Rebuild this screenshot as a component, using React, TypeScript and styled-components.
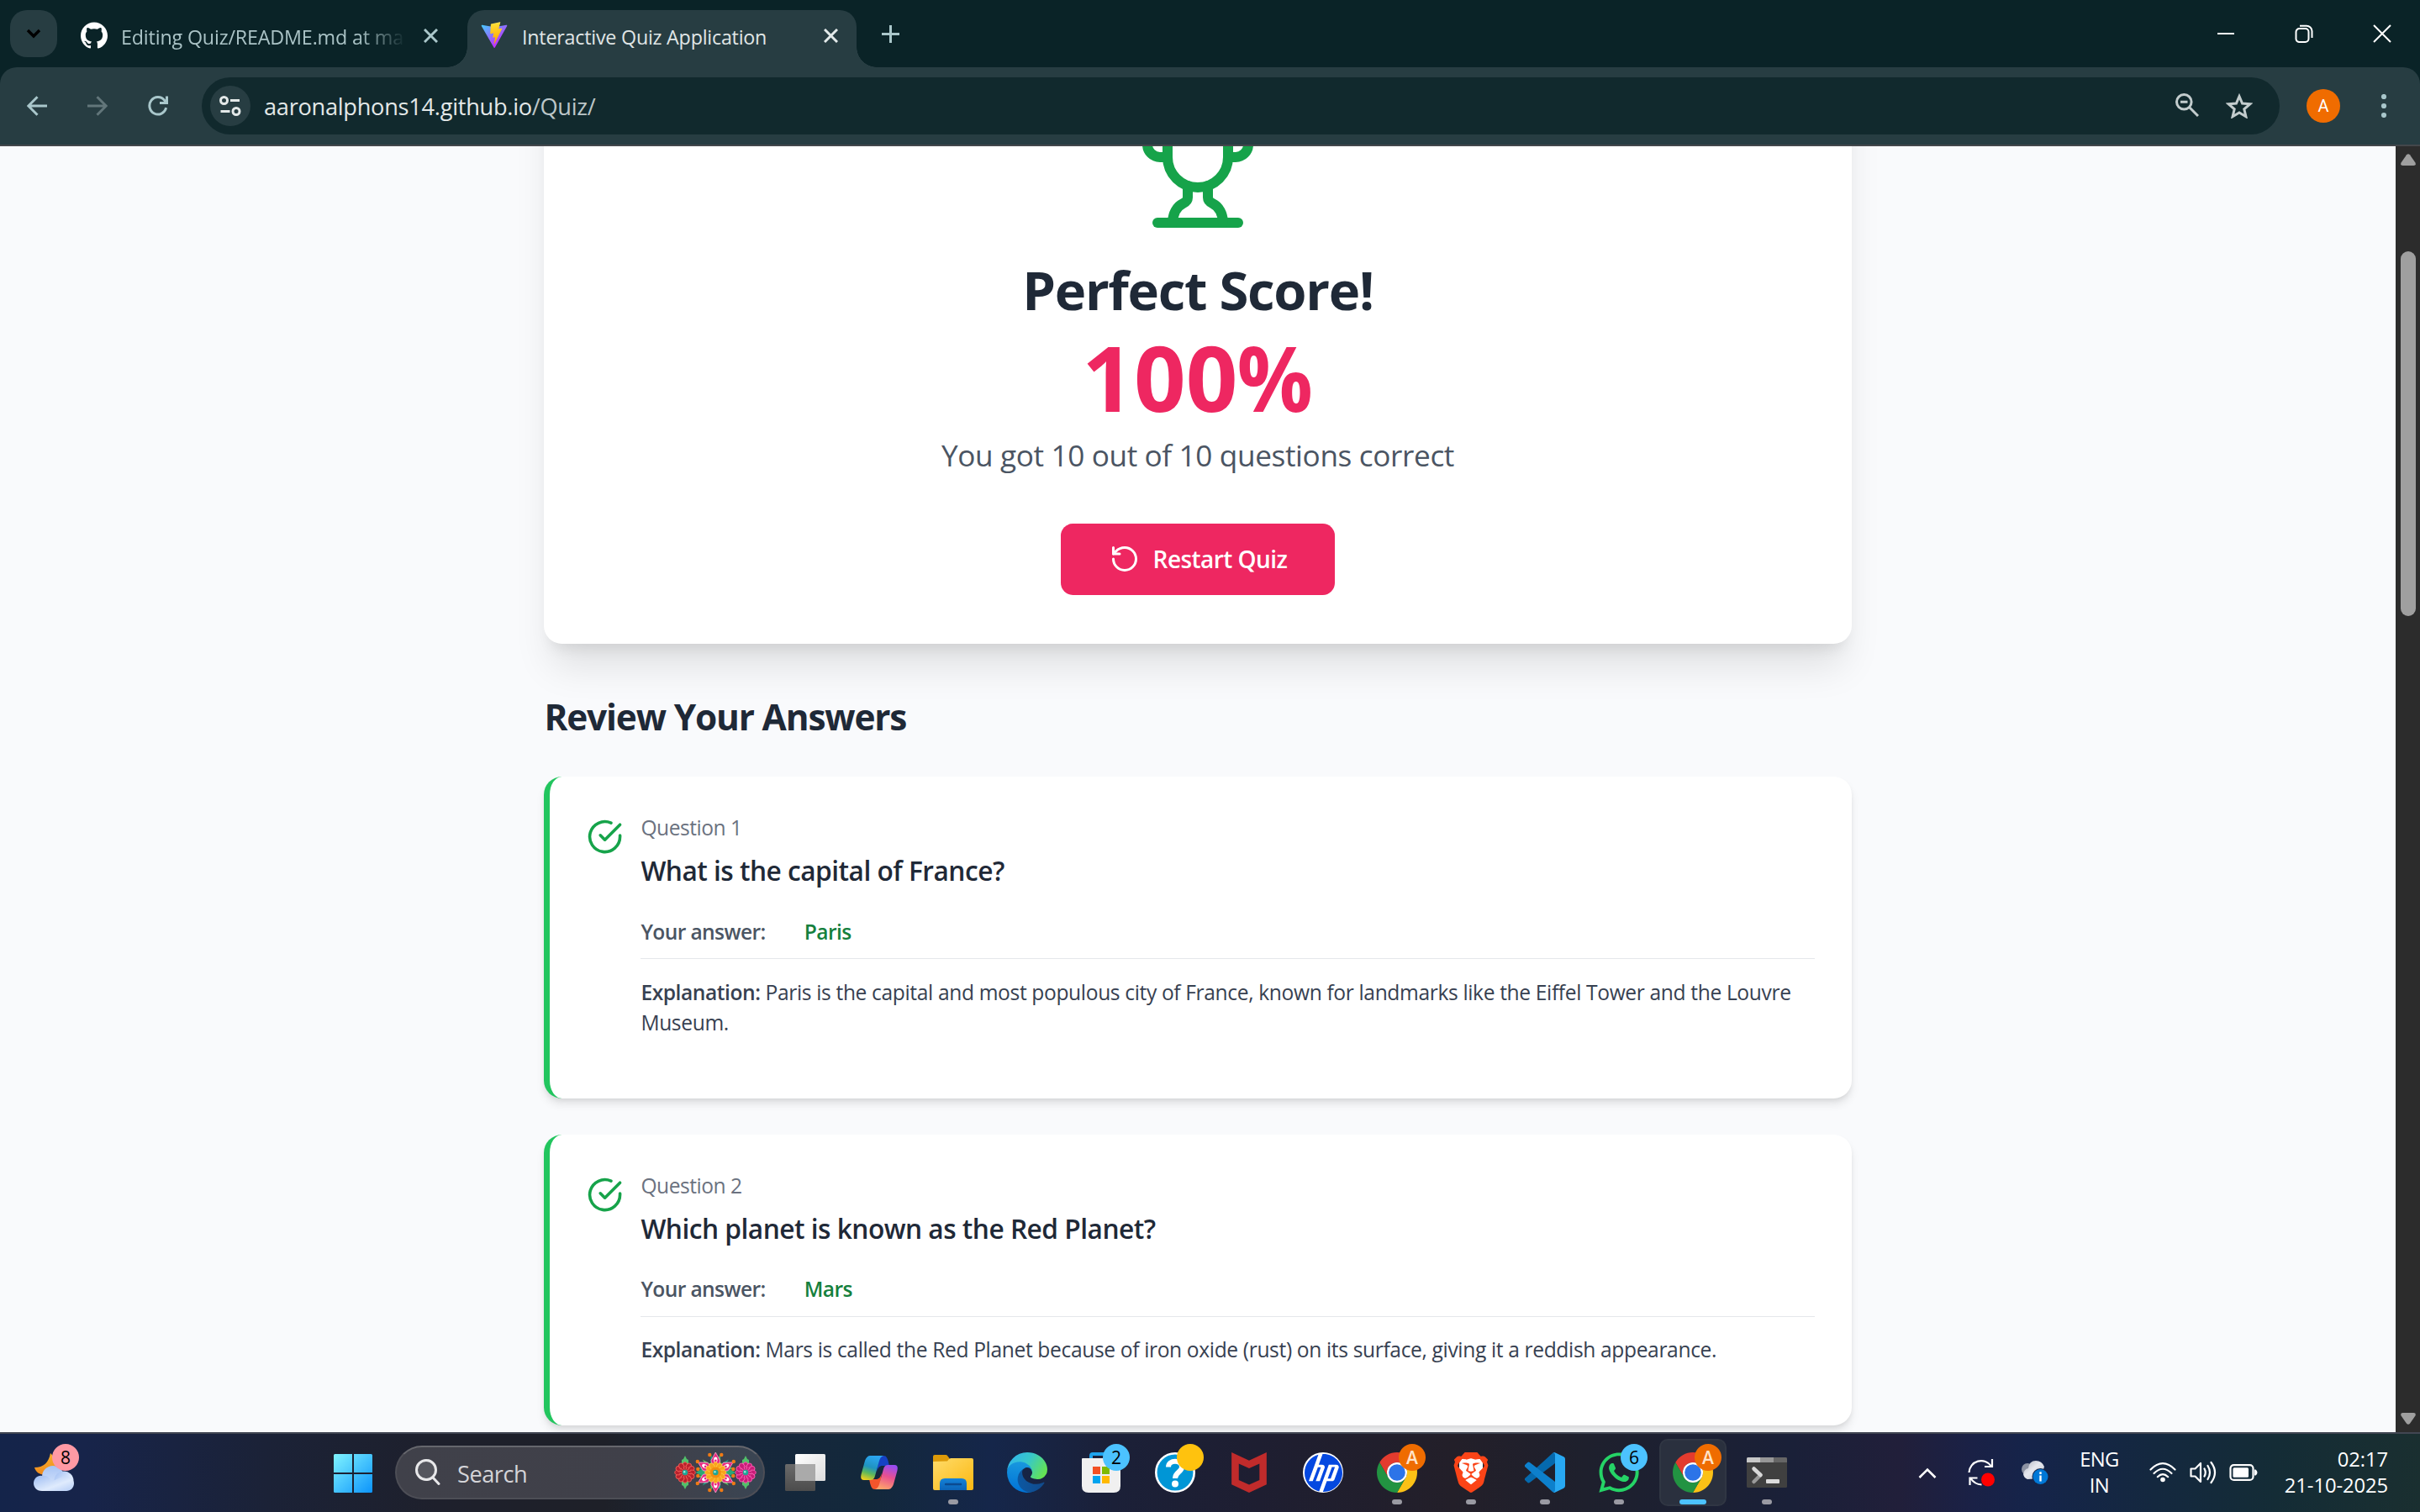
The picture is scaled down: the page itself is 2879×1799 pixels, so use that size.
import React from "react";
import styled, { createGlobalStyle, css } from "styled-components";
import { SiBrave, SiGithub, SiHp, SiMcafee } from "react-icons/si";
import { FaWhatsapp } from "react-icons/fa";

const UI_FONT = '"Open Sans", "Noto Sans", sans-serif';

const GlobalStyle = createGlobalStyle`
  * { box-sizing: border-box; }
  html, body { margin: 0; padding: 0; background: #0a2327; overflow: hidden; }
  body { font-family: ${UI_FONT}; }
  svg { display: block; flex: none; }
  h1, h2, h3, p { margin: 0; }
  button { font: inherit; border: 0; padding: 0; background: none; color: inherit; }
`;

const Screen = styled.div`
  width: 2879px;
  height: 1799px;
  display: flex;
  flex-direction: column;
  overflow: hidden;
  background: #0a2327;
`;

/* ---------- Browser chrome ---------- */

const TabStrip = styled.header`
  height: 80px;
  flex: none;
  display: flex;
  align-items: flex-start;
  padding: 12px 0 0 12px;
`;

const TabSearchButton = styled.button`
  width: 56px;
  height: 56px;
  border-radius: 20px;
  background: #273d42;
  display: grid;
  place-items: center;
`;

const Tab = styled.div<{ $active?: boolean }>`
  position: relative;
  display: flex;
  align-items: center;
  height: 68px;
  padding-bottom: 4px;
  font-size: 23.3px;
  line-height: 36px;
  white-space: nowrap;
  ${(p) =>
    p.$active
      ? css`
          width: 463px;
          padding-left: 16px;
          margin-top: 0;
          border-radius: 20px 20px 0 0;
          background: #273d42;
          color: #e0e6e6;
          letter-spacing: -0.23px;
          &::before,
          &::after {
            content: "";
            position: absolute;
            bottom: 0;
            width: 24px;
            height: 24px;
          }
          &::before {
            left: -24px;
            background: radial-gradient(circle at 0 0, transparent 23.5px, #273d42 24px);
          }
          &::after {
            right: -24px;
            background: radial-gradient(circle at 100% 0, transparent 23.5px, #273d42 24px);
          }
        `
      : css`
          width: 460px;
          margin-left: 28px;
          color: #aac3c6;
          letter-spacing: -0.17px;
        `}
`;

const TabIcon = styled.span`
  width: 32px;
  height: 32px;
  margin-top: -4px;
  display: grid;
  place-items: center;
  color: #fff;
`;

const TabTitle = styled.span<{ $width: number; $fade?: boolean }>`
  width: ${(p) => p.$width}px;
  margin-left: ${(p) => (p.$fade ? 16 : 17)}px;
  overflow: hidden;
  ${(p) => p.$fade && "mask-image: linear-gradient(to right, #000 84%, transparent 101%);"}
`;

const TabClose = styled.button<{ $gap: number; $color: string }>`
  margin: -4px 0 0 ${(p) => p.$gap}px;
  color: ${(p) => p.$color};
`;

const NewTab = styled.button`
  margin: 18px 0 0 30px;
  color: #aac7ca;
`;

const WindowControls = styled.div`
  display: flex;
  gap: 71px;
  margin: 17px 34px 0 auto;
  color: #fff;
`;

const Toolbar = styled.div`
  height: 94px;
  flex: none;
  display: flex;
  align-items: center;
  padding-left: 32px;
  border-radius: 20px 20px 0 0;
  border-bottom: 2px solid #43474b;
  background: #273d42;
  color: #a9c7cb;
`;

const NavIcons = styled.div`
  width: 208px;
  display: flex;
  gap: 48px;
`;

const NavIcon = styled.button<{ $dim?: boolean }>`
  color: ${(p) => (p.$dim ? "#62767a" : "#a9c7cb")};
`;

const Omnibox = styled.div`
  width: 2472px;
  height: 68px;
  border-radius: 34px;
  background: #11292d;
  display: flex;
  align-items: center;
  padding: 0 32px 0 10px;
  font-size: 27.2px;
  letter-spacing: -0.28px;
  color: #e3e8e8;
`;

const SiteInfo = styled.span`
  width: 48px;
  height: 48px;
  border-radius: 50%;
  background: #273d42;
  display: grid;
  place-items: center;
  margin-right: 16px;
`;

const UrlPath = styled.span`
  color: #bcc6c8;
`;

const OmniActions = styled.span`
  margin-left: auto;
  display: flex;
  gap: 32px;
  color: #c3cccd;
`;

const Avatar = styled.span`
  width: 40px;
  height: 40px;
  margin-left: 32px;
  border-radius: 50%;
  background: #f06c00;
  color: #fff;
  display: grid;
  place-items: center;
  font: 400 20px/40px Roboto, sans-serif;
`;

const MenuButton = styled.button`
  margin-left: 48px;
`;

/* ---------- Page ---------- */

const Viewport = styled.div`
  height: 1530px;
  flex: none;
  display: flex;
  overflow: hidden;
`;

const Page = styled.main`
  width: 2850px;
  height: 1530px;
  overflow: hidden;
  background: #f9fafc;
`;

const Column = styled.div`
  width: 1555.2px;
  margin: -98.6px auto 0;
  display: flex;
  flex-direction: column;
`;

const ResultCard = styled.section`
  display: flex;
  flex-direction: column;
  align-items: center;
  height: 690.2px;
  padding: 57.6px;
  border-radius: 21.6px;
  background: #fff;
  box-shadow: 0 36px 45px -9px rgba(0, 0, 0, 0.1), 0 14.4px 18px -10.8px rgba(0, 0, 0, 0.1);
`;

const ResultTitle = styled.h1`
  margin-top: 28.8px;
  padding-top: 3px;
  height: 72px;
  font-size: 63.4px;
  line-height: 72px;
  font-weight: 700;
  letter-spacing: -1.3px;
  color: #1f2937;
`;

const Score = styled.div`
  display: flex;
  margin-top: 14.4px;
  padding-top: 3px;
  height: 108px;
  font-size: 108px;
  line-height: 108px;
  font-weight: 700;
  color: #ee2761;
`;

const Percent = styled.span`
  margin: 0 -3px 0 -4px;
  transform: scaleX(0.93);
`;

const ScoreNote = styled.p`
  margin-top: 14.4px;
  padding-top: 1px;
  height: 50.4px;
  font-size: 35.2px;
  line-height: 50.4px;
  letter-spacing: -0.38px;
  color: #4b5563;
`;

const RestartButton = styled.button`
  display: flex;
  align-items: center;
  gap: 16px;
  width: 326px;
  height: 86.4px;
  margin-top: 57.6px;
  padding-left: 57.6px;
  border-radius: 14.4px;
  background: #ee2761;
  color: #fff;
  font-size: 28px;
  line-height: 43.2px;
  font-weight: 600;
  letter-spacing: -0.55px;
`;

const SectionTitle = styled.h2`
  margin: 57.6px 0 43.2px;
  padding-top: 1px;
  height: 57.6px;
  font-size: 42.4px;
  line-height: 57.6px;
  font-weight: 700;
  letter-spacing: -1.17px;
  color: #1f2937;
`;

const ReviewList = styled.div`
  display: flex;
  flex-direction: column;
  gap: 43.2px;
`;

const ReviewCard = styled.article`
  display: flex;
  gap: 21.6px;
  padding: 43.2px;
  border-left: 7.2px solid #22c55e;
  border-radius: 21.6px;
  background: #fff;
  box-shadow: 0 7.2px 10.8px -1.8px rgba(0, 0, 0, 0.1), 0 3.6px 7.2px -3.6px rgba(0, 0, 0, 0.1);
`;

const StatusIcon = styled.span`
  margin-top: 7.2px;
  color: #16a34a;
`;

const ReviewBody = styled.div`
  flex: 1;
  font-size: 24.6px;
  line-height: 36px;
  color: #374151;
`;

const QuestionIndex = styled.div`
  margin-bottom: 7.2px;
  letter-spacing: -0.48px;
  color: #6b7280;
`;

const QuestionText = styled.h3`
  margin-bottom: 28.8px;
  height: 50.4px;
  font-size: 31.7px;
  line-height: 51px;
  font-weight: 600;
  letter-spacing: -0.52px;
  color: #1f2937;
`;

const AnswerRow = styled.div`
  display: flex;
  gap: 14.4px;
  margin-bottom: 14.4px;
  line-height: 37px;
  height: 36px;
  font-weight: 600;
  letter-spacing: -0.62px;
`;

const AnswerLabel = styled.span`
  width: 180px;
  color: #4b5563;
`;

const AnswerValue = styled.span`
  color: #15803d;
`;

const Explanation = styled.p`
  margin-bottom: 28.8px;
  padding-top: 21.6px;
  border-top: 1px solid #e5e7eb;
  letter-spacing: -0.36px;
`;

const Strong = styled.strong`
  font-weight: 600;
  letter-spacing: -0.45px;
`;

const Scrollbar = styled.div`
  width: 29px;
  background: #2c2c2c;
  display: flex;
  flex-direction: column;
  align-items: center;
  padding: 9px 0;
`;

const Thumb = styled.div`
  width: 18px;
  height: 434px;
  margin: 102px 0 auto;
  border-radius: 9px;
  background: #9f9f9f;
`;

/* ---------- Taskbar ---------- */

const Taskbar = styled.footer`
  height: 95px;
  flex: none;
  display: flex;
  border-top: 2px solid #414652;
  background: linear-gradient(
    90deg,
    #14244a 0%, #17244a 3.5%, #1b2237 11%, #1e202c 18%, #1e2028 25%, #16273b 30.5%,
    #13283b 36%, #15264a 41%, #1b2038 46%, #1e1e31 52%, #231f29 60%, #1e202d 65.5%,
    #1a2038 74%, #211f3a 78.5%, #1a2146 81.5%, #15244a 84%, #14283f 89%, #142c36 94%, #1a2f30 100%
  );
  color: #fff;
`;

const WeatherSlot = styled.div`
  position: relative;
  width: 376px;
  padding: 20px 0 0 38px;
`;

const StartSlot = styled.button`
  width: 88px;
  height: 93px;
  display: grid;
  place-items: center;
`;

const SearchBox = styled.div`
  width: 440px;
  height: 64px;
  margin: 14px 4px 0 6px;
  padding: 0 8px 0 22px;
  display: flex;
  align-items: center;
  border: 2px solid #4d4e56;
  border-top-color: #66676d;
  border-radius: 32px;
  background: linear-gradient(90deg, #40414a, #404049 70%, #3a4553);
  color: #d4d4d8;
  font-size: 27.2px;
  letter-spacing: -0.5px;
`;

const SearchLabel = styled.span`
  margin: 2px auto 0 20px;
`;

const AppSlot = styled.button`
  position: relative;
  width: 88px;
  height: 92px;
  display: grid;
  place-items: center;
`;

const ActivePlate = styled.span`
  position: absolute;
  inset: 6px 4px;
  border-radius: 10px;
  border: 2px solid #303643;
  background: #2a303e;
`;

const AppIcon = styled.span`
  position: relative;
  display: grid;
  place-items: center;
`;

const Indicator = styled.span<{ $active?: boolean }>`
  position: absolute;
  top: 78px;
  left: ${(p) => (p.$active ? 28 : 38)}px;
  width: ${(p) => (p.$active ? 32 : 12)}px;
  height: 6px;
  border-radius: 3px;
  background: ${(p) => (p.$active ? "#4cc2ff" : "#9a9aa3")};
`;

const Badge = styled.span<{ $bg: string; $left?: number; $color?: string; $bold?: boolean }>`
  position: absolute;
  top: 12px;
  left: ${(p) => p.$left ?? 46}px;
  width: 32px;
  height: 32px;
  border-radius: 50%;
  background: ${(p) => p.$bg};
  color: ${(p) => p.$color ?? "#000"};
  font-size: 21px;
  line-height: 32px;
  font-weight: ${(p) => (p.$bold ? 600 : 400)};
  text-align: center;
`;

const Stack = styled.span`
  display: grid;
  place-items: center;
  > * { grid-area: 1 / 1; }
`;

const HpDisc = styled.span`
  width: 48px;
  height: 48px;
  border-radius: 50%;
  background: #fff;
`;

const BraveFace = styled.span`
  width: 28px;
  height: 34px;
  border-radius: 6px 6px 14px 14px;
  background: #fff;
`;

const Tray = styled.div`
  margin-left: auto;
  height: 92px;
  display: flex;
  align-items: center;
  padding-right: 38px;
`;

const TrayItem = styled.div<{ $w: number }>`
  width: ${(p) => p.$w}px;
  display: grid;
  place-items: center;
`;

const TrayText = styled.div<{ $w: number; $align: string; $ls?: number }>`
  width: ${(p) => p.$w}px;
  text-align: ${(p) => p.$align};
  font-size: 23.8px;
  line-height: 31px;
  letter-spacing: ${(p) => p.$ls ?? 0}px;
`;

/* ---------- Icons ---------- */

type StrokeProps = { w: number; h?: number; d: string; sw?: number; round?: boolean };

const Stroke = ({ w, h = w, d, sw = 3, round }: StrokeProps) => (
  <svg width={w} height={h} viewBox={`0 0 ${w} ${h}`} fill="none" stroke="currentColor" strokeWidth={sw}
    strokeLinecap={round ? "round" : "butt"} strokeLinejoin={round ? "round" : "miter"}>
    <path d={d} />
  </svg>
);

const Feather = ({ size, children }: { size: number; children: React.ReactNode }) => (
  <svg width={size} height={size} viewBox="0 0 24 24" fill="none" stroke="currentColor" strokeWidth="2"
    strokeLinecap="round" strokeLinejoin="round">{children}</svg>
);

const TrophyMark = styled.span`
  color: #16a34a;
`;

const Trophy = () => (
  <TrophyMark>
    <Feather size={144}>
      <path d="M6 9H4.5a2.5 2.5 0 0 1 0-5H6" />
      <path d="M18 9h1.5a2.5 2.5 0 0 0 0-5H18" />
      <path d="M4 22h16" />
      <path d="M10 14.66V17c0 .55-.47.98-.97 1.21C7.85 18.75 7 20.24 7 22" />
      <path d="M14 14.66V17c0 .55.47.98.97 1.21C16.15 18.75 17 20.24 17 22" />
      <path d="M18 2H6v7a6 6 0 0 0 12 0V2Z" />
    </Feather>
  </TrophyMark>
);

const ViteLogo = () => (
  <svg width="32" height="32" viewBox="0 0 410 404">
    <defs>
      <linearGradient id="viteA" x1="6" y1="33" x2="235" y2="344" gradientUnits="userSpaceOnUse">
        <stop stopColor="#41D1FF" /><stop offset="1" stopColor="#BD34FE" />
      </linearGradient>
      <linearGradient id="viteB" x1="194" y1="9" x2="236" y2="293" gradientUnits="userSpaceOnUse">
        <stop stopColor="#FFEA83" /><stop offset=".083" stopColor="#FFDD35" /><stop offset="1" stopColor="#FFA800" />
      </linearGradient>
    </defs>
    <path fill="url(#viteA)" d="M399.641 59.5246L215.643 388.545C211.844 395.338 202.084 395.378 198.228 388.618L10.5817 59.5563C6.38087 52.1896 12.6802 43.2665 21.0281 44.7586L205.223 77.6824C206.398 77.8924 207.601 77.8904 208.776 77.6763L389.119 44.8058C397.439 43.2894 403.768 52.1434 399.641 59.5246Z" />
    <path fill="url(#viteB)" d="M292.965 1.5744L156.801 28.2552C154.563 28.6937 152.906 30.5903 152.771 32.8664L144.395 174.33C144.198 177.662 147.258 180.248 150.51 179.498L188.42 170.749C191.967 169.931 195.172 173.055 194.443 176.622L183.18 231.775C182.422 235.487 185.907 238.661 189.532 237.56L212.947 230.446C216.577 229.344 220.065 232.527 219.297 236.242L201.398 322.875C200.278 328.294 207.486 331.249 210.492 326.603L212.5 323.5L323.454 102.072C325.312 98.3645 322.108 94.137 318.036 94.9228L279.014 102.454C275.347 103.161 272.227 99.746 273.262 96.1583L298.731 7.86689C299.767 4.27314 296.636 0.855181 292.965 1.5744Z" />
  </svg>
);

const TuneIcon = () => (
  <svg width="26" height="24" viewBox="0 0 26 24" fill="none" stroke="#e3e8e8" strokeWidth="3">
    <circle cx="5.5" cy="5.5" r="4" /><path d="M13 5.5h11" />
    <circle cx="20" cy="18.5" r="4" /><path d="M1.5 18.5h11" />
  </svg>
);

const ZoomOutIcon = () => (
  <svg width="28" height="28" viewBox="0 0 28 28" fill="none" stroke="currentColor" strokeWidth="3">
    <circle cx="10.3" cy="10.3" r="8.8" /><path d="M6 10.3h8.5M16.5 16.5l10.5 10.5" />
  </svg>
);

const StarIcon = () => (
  <svg width="32" height="30" viewBox="0 0 32 30" fill="none" stroke="currentColor" strokeWidth="3">
    <path d="M16 3.6l3.6 8.4 9.1.8-6.9 6 2.1 8.9L16 23l-7.9 4.7 2.1-8.9-6.9-6 9.1-.8z" />
  </svg>
);

const DotsIcon = () => (
  <svg width="8" height="28" viewBox="0 0 8 28" fill="currentColor">
    <circle cx="4" cy="3" r="3.1" /><circle cx="4" cy="14" r="3.1" /><circle cx="4" cy="25" r="3.1" />
  </svg>
);

const ReloadIcon = () => (
  <svg width="24" height="26" viewBox="0 0 24 26" fill="none" stroke="currentColor" strokeWidth="3">
    <path d="M21.6 15.2A10 10.3 0 1 1 19.6 6.2L22 9" /><path d="M22.5 1.5V9.5H14" />
  </svg>
);

const ScrollArrow = ({ down }: { down?: boolean }) => (
  <svg width="18" height="14" viewBox="0 0 18 14">
    <path fill="#9f9f9f" transform={down ? "rotate(180 9 7)" : undefined}
      d="M7 1.2Q9-.8 11 1.2L17.4 10.4Q18.8 14 15.5 14H2.5Q-.8 14 .6 10.4Z" />
  </svg>
);

const WeatherIcon = () => (
  <svg width="54" height="52" viewBox="0 0 54 52">
    <defs>
      <linearGradient id="moon" x1="0" y1="0" x2="0" y2="1"><stop stopColor="#f7b02c" /><stop offset="1" stopColor="#f08a1c" /></linearGradient>
      <linearGradient id="cloudBack" x1="0" y1="0" x2="0" y2="1"><stop stopColor="#a8c4f5" /><stop offset="1" stopColor="#d7e5fb" /></linearGradient>
      <linearGradient id="cloudFront" x1="0" y1="0" x2="1" y2="1"><stop stopColor="#9dbcf2" /><stop offset=".6" stopColor="#dfebfd" /><stop offset="1" stopColor="#b4ccf6" /></linearGradient>
    </defs>
    <path fill="url(#moon)" d="M22 3C20 14 14 20 3 20C5 27 12 30 18 28C28 26 33 14 22 3Z" />
    <circle cx="25" cy="31" r="13" fill="url(#cloudBack)" />
    <circle cx="38" cy="36" r="11.5" fill="url(#cloudFront)" />
    <path fill="url(#cloudFront)" d="M12 48C5 48 2 43 2 39C2 33 7 29 12 30C18 29 22 33 23 37L38 30C46 30 50 35 50 39C50 44 46 48 41 48Z" />
  </svg>
);

const WindowsLogo = () => (
  <svg width="46" height="46" viewBox="0 0 46 46">
    <defs><linearGradient id="win" x1="0" y1="0" x2="46" y2="46" gradientUnits="userSpaceOnUse"><stop stopColor="#80f4ff" /><stop offset="1" stopColor="#0c94fb" /></linearGradient></defs>
    <path fill="url(#win)" d="M1.5 0H22V22H0V1.5A1.5 1.5 0 0 1 1.5 0ZM24 0H44.500A1.500 1.500 0 0 1 46 1.500V22H24ZM0 24H22V46H1.500A1.500 1.500 0 0 1 0 44.500ZM24 24H46V44.500A1.500 1.500 0 0 1 44.500 46H24Z" />
  </svg>
);

const ring = (n: number) => Array.from({ length: n }, (_, i) => (i * 360) / n);

const Blossom = ({ cx, cy, dark, light }: { cx: number; cy: number; dark: string; light: string }) => (
  <g transform={`translate(${cx} ${cy})`}>
    {ring(12).map((a) => <ellipse key={a} transform={`rotate(${a})`} cy="-8" rx="2.9" ry="4.2" fill={dark} stroke={light} strokeWidth="1" />)}
    <circle r="6.5" fill={dark} />
    {ring(12).map((a) => <path key={a} transform={`rotate(${a + 15})`} d="M0-3.500V-7.500" stroke={light} strokeWidth="1" />)}
    <circle r="3.200" fill="#1fa595" /><circle cx="-.8" cy="-.8" r="1.200" fill="#9fe8dc" />
  </g>
);

const Flowers = () => (
  <svg width="98" height="48" viewBox="0 0 98 48">
    {[13, 85].map((x) => (
      <g key={x} fill="#52c06a">
        <path d={`M${x} 4l2 4 2 1 0 6h-8l0-6 2-1zM${x} 44l2-4 2-1 0-6h-8l0 6 2 1z`} />
      </g>
    ))}
    <Blossom cx={13} cy={24} dark="#b8202c" light="#ee5a55" />
    <Blossom cx={85} cy={24} dark="#c81b78" light="#f45cad" />
    <g transform="translate(49.300 24)">
      {ring(12).map((a) => <path key={a} transform={`rotate(${a + 15})`} d="M0-22L3.500-10H-3.500Z" fill={a % 60 ? "#1b9d83" : "#57bf5e"} />)}
      {ring(2).map((a) => <path key={a} transform={`rotate(${a})`} d="M24 0L10-7V7Z" fill="#2aa876" />)}
      {ring(6).map((a) => (
        <g key={a} transform={`rotate(${a})`}>
          <path d="M0-24L5.500-14L3-8H-3L-5.500-14Z" fill="#e8277f" stroke="#f8a6cc" strokeWidth=".8" />
          <ellipse cy="-15" rx="2.200" ry="3.400" fill="#fff" /><circle cy="-14" r="1.400" fill="#e8277f" />
        </g>
      ))}
      {[[-7, -21], [7, -21], [-21.500, -13], [21.500, -13], [-21, -4], [21, -4], [-21, 4], [21, 4], [-21.500, 13], [21.500, 13], [-7, 21], [7, 21]].map(([x, y]) => (
        <circle key={`${x}${y}`} cx={x} cy={y} r="2.200" fill="#f07a14" />
      ))}
      {ring(12).map((a) => <ellipse key={a} transform={`rotate(${a})`} cy="-8" rx="2.800" ry="4.600" fill="#f9a51c" stroke="#ffc94a" strokeWidth=".8" />)}
      <circle r="6.500" fill="#f08c12" /><circle r="3.200" fill="#1fa595" /><circle cx="-.8" cy="-.8" r="1.200" fill="#9fe8dc" />
    </g>
  </svg>
);

const SearchGlass = () => (
  <svg width="30" height="32" viewBox="0 0 30 32" fill="none" stroke="#e8e8ea" strokeWidth="3" strokeLinecap="round">
    <circle cx="13" cy="13" r="11.500" fill="#55565e" /><path d="M21.500 22.500l6.500 7" />
  </svg>
);

const TaskViewIcon = () => (
  <svg width="48" height="44" viewBox="0 0 48 44">
    <defs>
      <linearGradient id="tvW" x1="0" y1="0" x2="1" y2="1"><stop stopColor="#fff" /><stop offset="1" stopColor="#dcdcdc" /></linearGradient>
      <linearGradient id="tvG" x1="0" y1="0" x2="0" y2="1"><stop stopColor="#6a6a6a" /><stop offset="1" stopColor="#4c4c4c" /></linearGradient>
    </defs>
    <rect y="12" width="36" height="32" rx="1.500" fill="url(#tvG)" />
    <rect x="12" width="36" height="32" rx="1.500" fill="url(#tvW)" />
    <path d="M12 12H36V32H12Z" fill="#aaa" />
  </svg>
);

const CopilotIcon = () => (
  <svg width="44" height="40" viewBox="0 0 44 40">
    <defs>
      <linearGradient id="cpA" x1=".5" y1="0" x2=".2" y2="1"><stop stopColor="#2ba5f0" /><stop offset=".45" stopColor="#1f93c0" /><stop offset=".7" stopColor="#5cb85c" /><stop offset="1" stopColor="#f3d01b" /></linearGradient>
      <linearGradient id="cpB" x1=".6" y1="0" x2=".3" y2="1"><stop stopColor="#9a4cf0" /><stop offset=".45" stopColor="#e8508f" /><stop offset="1" stopColor="#ffa66a" /></linearGradient>
    </defs>
    <path fill="#1542c4" d="M22 0H27C31 0 32 3 34 12H26C22 12 21 14 19 19Z" />
    <path fill="#f2552c" d="M22 40H17C13 40 12 37 10 28H18C22 28 23 26 25 21Z" />
    <path fill="url(#cpA)" d="M12 0H27C24 1 23 3 22 6L17 24C16 28 14 29 11 29H4C0 29-.3 26 .6 22L5 6C7 1 9 0 12 0Z" />
    <path fill="url(#cpB)" d="M32 40H17C20 39 21 37 22 34L27 16C28 12 30 11 33 11H40C44 11 44.300 14 43.400 18L39 34C37 39 35 40 32 40Z" />
  </svg>
);

const FolderIcon = () => (
  <svg width="48" height="42" viewBox="0 0 48 42">
    <defs>
      <linearGradient id="fo" x1="0" y1="0" x2="1" y2="1"><stop stopColor="#ffdc6a" /><stop offset="1" stopColor="#fbb812" /></linearGradient>
      <linearGradient id="fb" x1="0" y1="0" x2="0" y2="1"><stop stopColor="#1482d8" /><stop offset="1" stopColor="#0c64b8" /></linearGradient>
    </defs>
    <path fill="#dd9a08" d="M2 0H15C17 0 18 2 20 5V10H0V2Q0 0 2 0Z" />
    <path fill="url(#fo)" d="M0 8L17 7.500Q19 4 21 4H46Q48 4 48 6V40Q48 42 46 42H2Q0 42 0 40Z" />
    <path fill="url(#fb)" d="M8 42V34Q8 28 14 28H34Q40 28 40 34V42Z" />
    <path d="M15 35H33" stroke="#0b4a90" strokeWidth="2.400" strokeLinecap="round" />
  </svg>
);

const EdgeIcon = () => (
  <svg width="48" height="48" viewBox="0 0 256 256">
    <defs>
      <linearGradient id="e1" x1="0" y1="0" x2="1" y2="0"><stop stopColor="#0c59a4" /><stop offset="1" stopColor="#114a8b" /></linearGradient>
      <linearGradient id="e2" x1=".5" y1="0" x2=".4" y2="1"><stop stopColor="#1a9adf" /><stop offset="1" stopColor="#0072d6" /></linearGradient>
      <linearGradient id="e3" x1="0" y1=".2" x2="1" y2=".6"><stop stopColor="#2fb4ee" /><stop offset=".5" stopColor="#38c8c8" /><stop offset="1" stopColor="#64e353" /></linearGradient>
    </defs>
    <path fill="url(#e1)" d="M231 190.500c-3.400 1.800-6.900 3.400-10.500 4.700a101.500 101.500 0 0 1-35.900 6.500c-47.300 0-88.500-32.500-88.500-74.300a31.500 31.500 0 0 1 16.400-27.300c-42.800 1.800-53.800 46.400-53.800 72.500 0 73.900 68.100 81.400 82.800 81.400 7.900 0 19.800-2.300 27-4.600l1.300-.4a128.300 128.300 0 0 0 66.600-52.800 4 4 0 0 0-5.400-5.700z" />
    <path fill="url(#e2)" d="M105.700 241.400A79.200 79.200 0 0 1 83 220.100a80.700 80.700 0 0 1 29.500-120c3.200-1.500 8.500-4.100 15.600-4a32.400 32.400 0 0 1 25.700 13 31.900 31.900 0 0 1 6.300 18.700c0-.2 24.500-79.600-80-79.600-43.900 0-80 41.600-80 78.200a130.200 130.200 0 0 0 12.100 56 128 128 0 0 0 156.400 67 75.500 75.500 0 0 1-62.800-8z" />
    <path fill="url(#e3)" d="M152.300 148.900c-.9 1-3.400 2.500-3.400 5.600 0 2.600 1.700 5.200 4.800 7.300 14.300 10 41.400 8.600 41.500 8.600a59.600 59.600 0 0 0 30.300-8.300 61.400 61.400 0 0 0 30.400-52.900c.3-22.400-8-37.300-11.300-43.900C223.500 23.900 177.700 0 128 0A128 128 0 0 0 0 126.200c.5-36.500 36.800-66 80-66 3.500 0 23.500.3 42 10a72.600 72.600 0 0 1 30.900 29.300c6.100 10.600 7.200 24.100 7.200 29.500s-2.700 13.300-7.800 19.900z" />
  </svg>
);

const StoreIcon = () => (
  <svg width="46" height="48" viewBox="0 0 46 48">
    <path d="M11 12V4Q11 2 13 2H33Q35 2 35 4V12" fill="none" stroke="#1fa4ee" strokeWidth="4" />
    <path fill="#f0f0f0" d="M0 8Q0 7 1 7H45Q46 7 46 8V40Q46 48 38 48H8Q0 48 0 40Z" />
    <path fill="#f25022" d="M13 17h9v9h-9z" /><path fill="#7fba00" d="M24 17h9v9h-9z" />
    <path fill="#00a4ef" d="M13 28h9v9h-9z" /><path fill="#ffb900" d="M24 28h9v9h-9z" />
  </svg>
);

const HelpIcon = () => (
  <svg width="48" height="48" viewBox="0 0 48 48">
    <circle cx="24" cy="24" r="22.700" fill="#0096d6" stroke="#fff" strokeWidth="2.600" />
    <path d="M16 17.500C16 8.500 32 8.500 32 17.500C32 23.500 24 23.500 24 31" fill="none" stroke="#fff" strokeWidth="6" />
    <circle cx="24" cy="37.500" r="4" fill="#fff" />
  </svg>
);

const ChromeIcon = () => (
  <svg width="48" height="48" viewBox="0 0 48 48">
    <path fill="#e33b2e" d="M3.220 12A24 24 0 0 1 44.780 12H24A12 12 0 0 0 13.610 30Z" />
    <path fill="#fbc116" d="M44.780 12A24 24 0 0 1 24 48L34.390 30A12 12 0 0 0 24 12Z" />
    <path fill="#229342" d="M24 48A24 24 0 0 1 3.220 12L13.610 30A12 12 0 0 0 34.390 30Z" />
    <circle cx="24" cy="24" r="12" fill="#fff" /><circle cx="24" cy="24" r="9.800" fill="#2c74e8" />
  </svg>
);

const CodeIcon = () => (
  <svg width="48" height="48" viewBox="0 0 24 24">
    <path fill="#0569ad" d="M.330 15.260L16.500.500Q17.300-.100 18 .200V6.550L2.930 18A1 1 0 0 1 1.650 17.940L.330 16.740A1 1 0 0 1 .330 15.260Z" />
    <path fill="#0d80cc" d="M.330 8.740L16.500 23.500Q17.300 24.100 18 23.800V17.450L2.930 6A1 1 0 0 0 1.650 6.060L.330 7.260A1 1 0 0 0 .330 8.740Z" />
    <path fill="#28a8f2" d="M18.210.210L23.150 2.590A1.500 1.500 0 0 1 24 3.940V20.060A1.500 1.500 0 0 1 23.150 21.410L18.210 23.790Q17.300 24.100 16.500 23.500Q18 23.900 18 22.500V1.500Q18 .100 16.500.500Q17.300-.100 18.210.210Z" />
  </svg>
);

const TerminalIcon = () => (
  <svg width="48" height="36" viewBox="0 0 48 36">
    <rect width="48" height="36" rx="1.500" fill="#404040" />
    <path fill="#c8c8c8" d="M1.500 0H16V6H0V1.500Q0 0 1.500 0Z" /><path fill="#979797" d="M16 0H32V6H16Z" /><path fill="#666" d="M32 0H46.500Q48 0 48 1.500V6H32Z" />
    <path d="M16.500 21L8.500 29" stroke="#9a9a9a" strokeWidth="4.500" strokeLinecap="round" />
    <path d="M8.500 13.500L16.500 21" stroke="#d8d8d8" strokeWidth="4.500" strokeLinecap="round" />
    <rect x="23" y="26" width="16" height="5" rx="1" fill="#dcdcdc" />
  </svg>
);

const SyncIcon = () => (
  <svg width="32" height="34" viewBox="0 0 32 34" fill="none" stroke="#fff" strokeWidth="2.200">
    <path d="M1.500 17A14.500 14.500 0 0 1 28 9.500M29 1V10H20" />
    <path d="M16.500 31.500Q8 31 3.500 24M2.500 32V23.500H11.500" />
    <circle cx="24" cy="25.500" r="8" fill="#ff0000" stroke="none" />
  </svg>
);

const CloudInfoIcon = () => (
  <svg width="34" height="30" viewBox="0 0 34 30">
    <defs><linearGradient id="od" x1="0" y1="0" x2="1" y2="1"><stop stopColor="#a9adba" /><stop offset=".45" stopColor="#e6e8ee" /><stop offset="1" stopColor="#c4c7d0" /></linearGradient></defs>
    <circle cx="8" cy="11" r="7" fill="#8d93a3" />
    <path fill="url(#od)" d="M8 23A8 8 0 0 1 3 17Q4 11 9 10Q10 1 18 1Q25 1 28 8L24 22Z" />
    <circle cx="23.500" cy="20" r="10" fill="#16264a" />
    <circle cx="23.500" cy="20" r="9" fill="#0078d7" />
    <path d="M23.500 18.500V25.500M23.500 14.300V17" stroke="#fff" strokeWidth="2.400" />
  </svg>
);

const WifiIcon = () => (
  <svg width="32" height="24" viewBox="0 0 32 24" fill="none" stroke="#fff" strokeWidth="2.200" strokeLinecap="round">
    <path d="M1.500 8.500Q16-6 30.500 8.500" /><path d="M5.500 13Q16 2.500 26.500 13" /><path d="M9.800 17.200Q16 11 22.200 17.200" />
    <circle cx="16" cy="20.500" r="2.800" fill="#fff" stroke="none" />
  </svg>
);

const VolumeIcon = () => (
  <svg width="33" height="28" viewBox="0 0 33 28" fill="none" stroke="#fff" strokeWidth="2.200" strokeLinecap="round" strokeLinejoin="round">
    <path d="M1.500 9.500H6.500L13 3V25L6.500 18.500H1.500Z" />
    <path d="M17.500 9.500Q20 14 17.500 18.500M21.500 6Q26.500 14 21.500 22M25.500 2Q34.500 14 25.500 26" />
  </svg>
);

const BatteryIcon = () => (
  <svg width="34" height="20" viewBox="0 0 34 20">
    <rect x="1.500" y="1.100" width="27" height="17.800" rx="4" fill="none" stroke="#fff" strokeWidth="2.200" />
    <rect x="4.500" y="4.200" width="18.500" height="11.600" rx="1.500" fill="#fff" />
    <path d="M30 6.500H31.500Q33.500 8 33.500 10T31.500 13.500H30Z" fill="#fff" />
  </svg>
);

/* ---------- Data ---------- */

const reviews = [
  {
    question: "What is the capital of France?",
    answer: "Paris",
    explanation:
      "Paris is the capital and most populous city of France, known for landmarks like the Eiffel Tower and the Louvre Museum.",
  },
  {
    question: "Which planet is known as the Red Planet?",
    answer: "Mars",
    explanation:
      "Mars is called the Red Planet because of iron oxide (rust) on its surface, giving it a reddish appearance.",
  },
];

type App = {
  name: string;
  icon: React.ReactNode;
  running?: boolean;
  active?: boolean;
  badge?: { bg: string; text?: string; color?: string; bold?: boolean };
};

const profileBadge = { bg: "#ef6c00", text: "A", color: "#ffe3c8", bold: true };

const apps: App[] = [
  { name: "task-view", icon: <TaskViewIcon /> },
  { name: "copilot", icon: <CopilotIcon /> },
  { name: "explorer", icon: <FolderIcon />, running: true },
  { name: "edge", icon: <EdgeIcon /> },
  { name: "store", icon: <StoreIcon />, badge: { bg: "#4cc2ff", text: "2" } },
  { name: "help", icon: <HelpIcon />, badge: { bg: "#ffc20e" } },
  { name: "mcafee", icon: <SiMcafee size={48} color="#c02b2b" /> },
  { name: "hp", icon: <Stack><HpDisc /><SiHp size={45} color="#0448e0" /></Stack> },
  { name: "chrome", icon: <ChromeIcon />, running: true, badge: profileBadge },
  { name: "brave", icon: <Stack><BraveFace /><SiBrave size={48} color="#fb4417" /></Stack>, running: true },
  { name: "code", icon: <CodeIcon />, running: true },
  { name: "whatsapp", icon: <FaWhatsapp size={54} color="#25d366" />, running: true, badge: { bg: "#4cc2ff", text: "6" } },
  { name: "chrome-active", icon: <ChromeIcon />, running: true, active: true, badge: profileBadge },
  { name: "terminal", icon: <TerminalIcon />, running: true },
];

const CROSS = "M1 1L16 16M16 1L1 16";

export default function App() {
  return (
    <Screen>
      <GlobalStyle />
      <TabStrip>
        <TabSearchButton><Stroke w={18} h={12} d="M2 2L9 9L16 2" sw={3.4} /></TabSearchButton>
        <Tab>
          <TabIcon><SiGithub size={32} /></TabIcon>
          <TabTitle $width={336} $fade>Editing Quiz/README.md at main</TabTitle>
          <TabClose $gap={24} $color="#aac7ca"><Stroke w={17} d={CROSS} /></TabClose>
        </Tab>
        <Tab $active>
          <TabIcon><ViteLogo /></TabIcon>
          <TabTitle $width={340}>Interactive Quiz Application</TabTitle>
          <TabClose $gap={19} $color="#e3eaea"><Stroke w={17} d={CROSS} /></TabClose>
        </Tab>
        <NewTab><Stroke w={21} d="M10.500 0V21M0 10.500H21" /></NewTab>
        <WindowControls>
          <Stroke w={22} d="M1 11H21" sw={2} />
          <Stroke w={22} d="M4.500 5H12.500A4 4 0 0 1 16.500 9V17A4 4 0 0 1 12.500 21H5A4 4 0 0 1 1.500 17.500V9A4 4 0 0 1 5.500 5M6 1.800H14A6.500 6.500 0 0 1 20.500 8V16" sw={2} />
          <Stroke w={22} d="M1 1L21 21M21 1L1 21" sw={2} />
        </WindowControls>
      </TabStrip>
      <Toolbar>
        <NavIcons>
          <NavIcon><Stroke w={24} d="M24 12H2.500M12.500 1.200L1.800 12L12.500 22.800" /></NavIcon>
          <NavIcon $dim><Stroke w={24} d="M0 12H21.500M11.500 1.200L22.200 12L11.500 22.800" /></NavIcon>
          <NavIcon><ReloadIcon /></NavIcon>
        </NavIcons>
        <Omnibox>
          <SiteInfo><TuneIcon /></SiteInfo>
          aaronalphons14.github.io<UrlPath>/Quiz/</UrlPath>
          <OmniActions><ZoomOutIcon /><StarIcon /></OmniActions>
        </Omnibox>
        <Avatar>A</Avatar>
        <MenuButton><DotsIcon /></MenuButton>
      </Toolbar>
      <Viewport>
        <Page>
          <Column>
            <ResultCard>
              <Trophy />
              <ResultTitle>Perfect Score!</ResultTitle>
              <Score>100<Percent>%</Percent></Score>
              <ScoreNote>You got 10 out of 10 questions correct</ScoreNote>
              <RestartButton>
                <Feather size={36}>
                  <path d="M3 12a9 9 0 1 0 9-9 9.750 9.750 0 0 0-6.740 2.740L3 8" />
                  <path d="M3 3v5h5" />
                </Feather>
                Restart Quiz
              </RestartButton>
            </ResultCard>
            <SectionTitle>Review Your Answers</SectionTitle>
            <ReviewList>
              {reviews.map((r, i) => (
                <ReviewCard key={r.question}>
                  <StatusIcon>
                    <Feather size={43.2}>
                      <path d="M22 11.080V12a10 10 0 1 1-5.930-9.140" />
                      <path d="m9 11 3 3L22 4" />
                    </Feather>
                  </StatusIcon>
                  <ReviewBody>
                    <QuestionIndex>Question {i + 1}</QuestionIndex>
                    <QuestionText>{r.question}</QuestionText>
                    <AnswerRow>
                      <AnswerLabel>Your answer:</AnswerLabel>
                      <AnswerValue>{r.answer}</AnswerValue>
                    </AnswerRow>
                    <Explanation><Strong>Explanation:</Strong> {r.explanation}</Explanation>
                  </ReviewBody>
                </ReviewCard>
              ))}
            </ReviewList>
          </Column>
        </Page>
        <Scrollbar>
          <ScrollArrow />
          <Thumb />
          <ScrollArrow down />
        </Scrollbar>
      </Viewport>
      <Taskbar>
        <WeatherSlot>
          <WeatherIcon />
          <Badge $bg="#ff99a4" $left={62}>8</Badge>
        </WeatherSlot>
        <StartSlot><WindowsLogo /></StartSlot>
        <SearchBox>
          <SearchGlass />
          <SearchLabel>Search</SearchLabel>
          <Flowers />
        </SearchBox>
        {apps.map((a) => (
          <AppSlot key={a.name}>
            {a.active && <ActivePlate />}
            <AppIcon>{a.icon}</AppIcon>
            {a.badge && <Badge $bg={a.badge.bg} $color={a.badge.color} $bold={a.badge.bold}>{a.badge.text}</Badge>}
            {a.running && <Indicator $active={a.active} />}
          </AppSlot>
        ))}
        <Tray>
          <TrayItem $w={44}><Stroke w={22} h={13} d="M1.500 12L11 2.500L20.500 12" sw={2.600} /></TrayItem>
          <TrayItem $w={84}><SyncIcon /></TrayItem>
          <TrayItem $w={44}><CloudInfoIcon /></TrayItem>
          <TrayText $w={109} $align="center" $ls={-0.6}>ENG<br />IN</TrayText>
          <TrayItem $w={42}><WifiIcon /></TrayItem>
          <TrayItem $w={54}><VolumeIcon /></TrayItem>
          <TrayItem $w={41}><BatteryIcon /></TrayItem>
          <TrayText $w={152} $align="right" $ls={-0.1}>02:17<br />21-10-2025</TrayText>
        </Tray>
      </Taskbar>
    </Screen>
  );
}
